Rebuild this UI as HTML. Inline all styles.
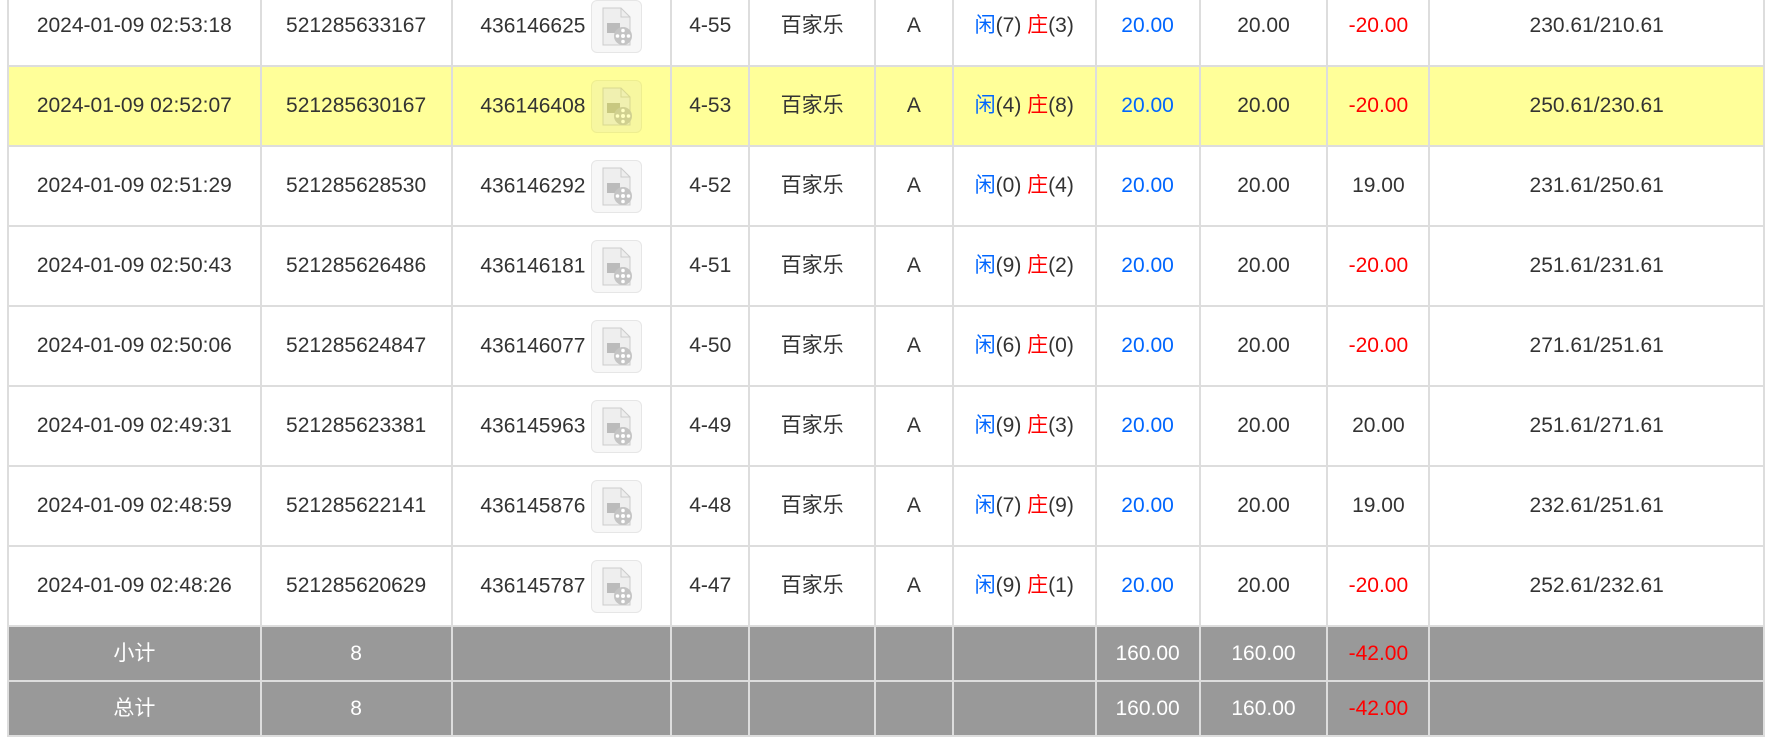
<!DOCTYPE html>
<html><head><meta charset="utf-8"><style>
body{margin:0;width:1765px;height:742px;overflow:hidden;background:#fff;font-family:"Liberation Sans","Noto Sans CJK SC",sans-serif;}
table{position:absolute;left:7px;top:-15px;border-collapse:collapse;table-layout:fixed;font-size:21px;color:#333;}
td{border:2px solid #ddd;text-align:center;padding:0;height:78px;line-height:24px;}
tr.y td{background:#ffff99;}
tr.g td{background:#999;color:#fff;height:53px;}
.b{color:#0066ff}.r{color:#f00}
.c{position:relative;top:0}
.ic{display:inline-block;width:51px;height:53px;border:1px solid #e6e6e6;border-radius:6px;background:#f7f7f7;vertical-align:middle;margin-left:6px;box-sizing:border-box;}
tr.y .ic{background:#f7f7a0;border-color:#eeee90}
.num{vertical-align:middle}
</style></head><body>
<table>
<colgroup><col style="width:253px"><col style="width:191px"><col style="width:220px"><col style="width:78px"><col style="width:126px"><col style="width:78px"><col style="width:143px"><col style="width:104px"><col style="width:128px"><col style="width:102px"><col style="width:335px"></colgroup>
<tbody>
<tr><td>2024-01-09 02:53:18</td><td>521285633167</td><td><span class="num">436146625</span><span class="ic"><svg width="49" height="51" viewBox="0 0 49 51"><path d="M11 7h18l9 9v28H11z" fill="#eee" stroke="#ccc"/><path d="M29 7v9h9" fill="none" stroke="#ccc"/><rect x="15" y="22" width="13" height="10" fill="#bbb"/><circle cx="31" cy="35" r="9" fill="#c4c4c4"/><circle cx="31" cy="35" r="2" fill="#fff"/><circle cx="31" cy="29.5" r="1.8" fill="#fff"/><circle cx="31" cy="40.5" r="1.8" fill="#fff"/><circle cx="25.5" cy="35" r="1.8" fill="#fff"/><circle cx="36.5" cy="35" r="1.8" fill="#fff"/></svg></span></td><td>4-55</td><td><span class="c">百家乐</span></td><td>A</td><td><span class="b c">闲</span>(7) <span class="r c">庄</span>(3)</td><td class="b">20.00</td><td>20.00</td><td class="r">-20.00</td><td>230.61/210.61</td></tr>
<tr class="y"><td>2024-01-09 02:52:07</td><td>521285630167</td><td><span class="num">436146408</span><span class="ic"><svg width="49" height="51" viewBox="0 0 49 51"><path d="M11 7h18l9 9v28H11z" fill="#f0f0b0" stroke="#d8d890"/><path d="M29 7v9h9" fill="none" stroke="#d8d890"/><rect x="15" y="22" width="13" height="10" fill="#c8c880"/><circle cx="31" cy="35" r="9" fill="#d0d090"/><circle cx="31" cy="35" r="2" fill="#ffffc0"/><circle cx="31" cy="29.5" r="1.8" fill="#ffffc0"/><circle cx="31" cy="40.5" r="1.8" fill="#ffffc0"/><circle cx="25.5" cy="35" r="1.8" fill="#ffffc0"/><circle cx="36.5" cy="35" r="1.8" fill="#ffffc0"/></svg></span></td><td>4-53</td><td><span class="c">百家乐</span></td><td>A</td><td><span class="b c">闲</span>(4) <span class="r c">庄</span>(8)</td><td class="b">20.00</td><td>20.00</td><td class="r">-20.00</td><td>250.61/230.61</td></tr>
<tr><td>2024-01-09 02:51:29</td><td>521285628530</td><td><span class="num">436146292</span><span class="ic"><svg width="49" height="51" viewBox="0 0 49 51"><path d="M11 7h18l9 9v28H11z" fill="#eee" stroke="#ccc"/><path d="M29 7v9h9" fill="none" stroke="#ccc"/><rect x="15" y="22" width="13" height="10" fill="#bbb"/><circle cx="31" cy="35" r="9" fill="#c4c4c4"/><circle cx="31" cy="35" r="2" fill="#fff"/><circle cx="31" cy="29.5" r="1.8" fill="#fff"/><circle cx="31" cy="40.5" r="1.8" fill="#fff"/><circle cx="25.5" cy="35" r="1.8" fill="#fff"/><circle cx="36.5" cy="35" r="1.8" fill="#fff"/></svg></span></td><td>4-52</td><td><span class="c">百家乐</span></td><td>A</td><td><span class="b c">闲</span>(0) <span class="r c">庄</span>(4)</td><td class="b">20.00</td><td>20.00</td><td>19.00</td><td>231.61/250.61</td></tr>
<tr><td>2024-01-09 02:50:43</td><td>521285626486</td><td><span class="num">436146181</span><span class="ic"><svg width="49" height="51" viewBox="0 0 49 51"><path d="M11 7h18l9 9v28H11z" fill="#eee" stroke="#ccc"/><path d="M29 7v9h9" fill="none" stroke="#ccc"/><rect x="15" y="22" width="13" height="10" fill="#bbb"/><circle cx="31" cy="35" r="9" fill="#c4c4c4"/><circle cx="31" cy="35" r="2" fill="#fff"/><circle cx="31" cy="29.5" r="1.8" fill="#fff"/><circle cx="31" cy="40.5" r="1.8" fill="#fff"/><circle cx="25.5" cy="35" r="1.8" fill="#fff"/><circle cx="36.5" cy="35" r="1.8" fill="#fff"/></svg></span></td><td>4-51</td><td><span class="c">百家乐</span></td><td>A</td><td><span class="b c">闲</span>(9) <span class="r c">庄</span>(2)</td><td class="b">20.00</td><td>20.00</td><td class="r">-20.00</td><td>251.61/231.61</td></tr>
<tr><td>2024-01-09 02:50:06</td><td>521285624847</td><td><span class="num">436146077</span><span class="ic"><svg width="49" height="51" viewBox="0 0 49 51"><path d="M11 7h18l9 9v28H11z" fill="#eee" stroke="#ccc"/><path d="M29 7v9h9" fill="none" stroke="#ccc"/><rect x="15" y="22" width="13" height="10" fill="#bbb"/><circle cx="31" cy="35" r="9" fill="#c4c4c4"/><circle cx="31" cy="35" r="2" fill="#fff"/><circle cx="31" cy="29.5" r="1.8" fill="#fff"/><circle cx="31" cy="40.5" r="1.8" fill="#fff"/><circle cx="25.5" cy="35" r="1.8" fill="#fff"/><circle cx="36.5" cy="35" r="1.8" fill="#fff"/></svg></span></td><td>4-50</td><td><span class="c">百家乐</span></td><td>A</td><td><span class="b c">闲</span>(6) <span class="r c">庄</span>(0)</td><td class="b">20.00</td><td>20.00</td><td class="r">-20.00</td><td>271.61/251.61</td></tr>
<tr><td>2024-01-09 02:49:31</td><td>521285623381</td><td><span class="num">436145963</span><span class="ic"><svg width="49" height="51" viewBox="0 0 49 51"><path d="M11 7h18l9 9v28H11z" fill="#eee" stroke="#ccc"/><path d="M29 7v9h9" fill="none" stroke="#ccc"/><rect x="15" y="22" width="13" height="10" fill="#bbb"/><circle cx="31" cy="35" r="9" fill="#c4c4c4"/><circle cx="31" cy="35" r="2" fill="#fff"/><circle cx="31" cy="29.5" r="1.8" fill="#fff"/><circle cx="31" cy="40.5" r="1.8" fill="#fff"/><circle cx="25.5" cy="35" r="1.8" fill="#fff"/><circle cx="36.5" cy="35" r="1.8" fill="#fff"/></svg></span></td><td>4-49</td><td><span class="c">百家乐</span></td><td>A</td><td><span class="b c">闲</span>(9) <span class="r c">庄</span>(3)</td><td class="b">20.00</td><td>20.00</td><td>20.00</td><td>251.61/271.61</td></tr>
<tr><td>2024-01-09 02:48:59</td><td>521285622141</td><td><span class="num">436145876</span><span class="ic"><svg width="49" height="51" viewBox="0 0 49 51"><path d="M11 7h18l9 9v28H11z" fill="#eee" stroke="#ccc"/><path d="M29 7v9h9" fill="none" stroke="#ccc"/><rect x="15" y="22" width="13" height="10" fill="#bbb"/><circle cx="31" cy="35" r="9" fill="#c4c4c4"/><circle cx="31" cy="35" r="2" fill="#fff"/><circle cx="31" cy="29.5" r="1.8" fill="#fff"/><circle cx="31" cy="40.5" r="1.8" fill="#fff"/><circle cx="25.5" cy="35" r="1.8" fill="#fff"/><circle cx="36.5" cy="35" r="1.8" fill="#fff"/></svg></span></td><td>4-48</td><td><span class="c">百家乐</span></td><td>A</td><td><span class="b c">闲</span>(7) <span class="r c">庄</span>(9)</td><td class="b">20.00</td><td>20.00</td><td>19.00</td><td>232.61/251.61</td></tr>
<tr><td>2024-01-09 02:48:26</td><td>521285620629</td><td><span class="num">436145787</span><span class="ic"><svg width="49" height="51" viewBox="0 0 49 51"><path d="M11 7h18l9 9v28H11z" fill="#eee" stroke="#ccc"/><path d="M29 7v9h9" fill="none" stroke="#ccc"/><rect x="15" y="22" width="13" height="10" fill="#bbb"/><circle cx="31" cy="35" r="9" fill="#c4c4c4"/><circle cx="31" cy="35" r="2" fill="#fff"/><circle cx="31" cy="29.5" r="1.8" fill="#fff"/><circle cx="31" cy="40.5" r="1.8" fill="#fff"/><circle cx="25.5" cy="35" r="1.8" fill="#fff"/><circle cx="36.5" cy="35" r="1.8" fill="#fff"/></svg></span></td><td>4-47</td><td><span class="c">百家乐</span></td><td>A</td><td><span class="b c">闲</span>(9) <span class="r c">庄</span>(1)</td><td class="b">20.00</td><td>20.00</td><td class="r">-20.00</td><td>252.61/232.61</td></tr>
<tr class="g"><td><span class="c">小计</span></td><td>8</td><td></td><td></td><td></td><td></td><td></td><td>160.00</td><td>160.00</td><td style="color:#f00">-42.00</td><td></td></tr>
<tr class="g"><td><span class="c">总计</span></td><td>8</td><td></td><td></td><td></td><td></td><td></td><td>160.00</td><td>160.00</td><td style="color:#f00">-42.00</td><td></td></tr>
</tbody></table>
</body></html>
